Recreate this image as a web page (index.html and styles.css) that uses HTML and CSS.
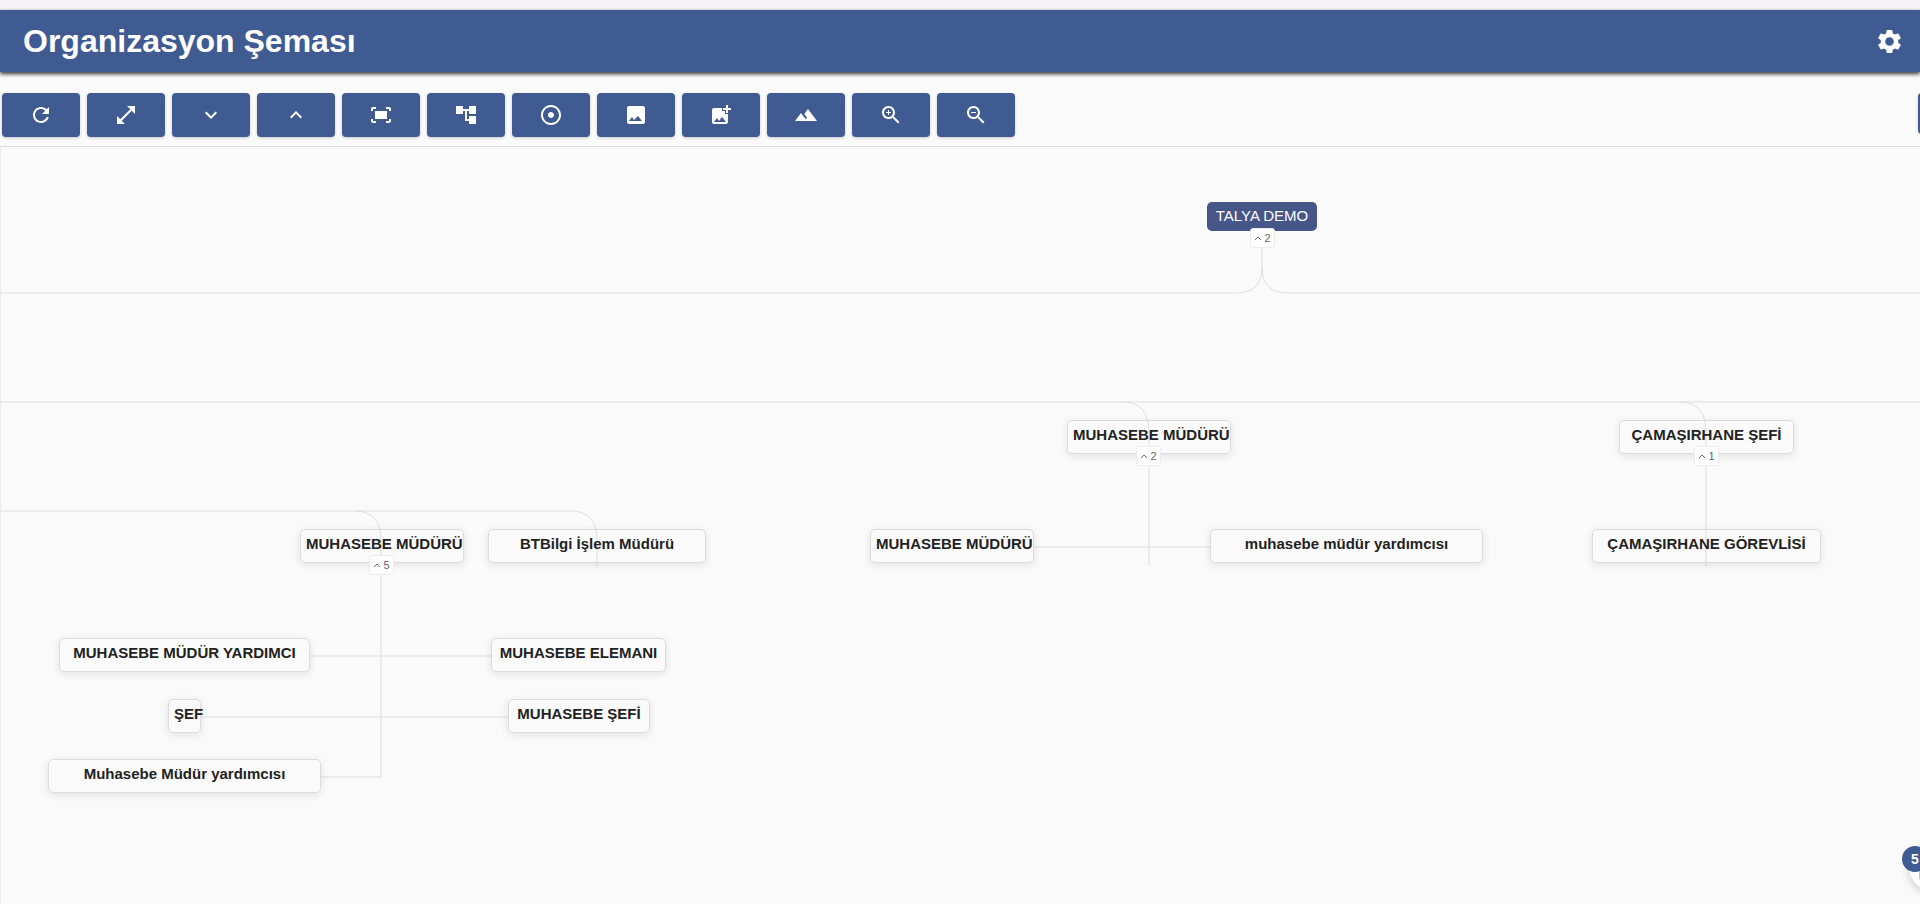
FILE: index.html
```
<!DOCTYPE html>
<html lang="tr">
<head>
  <meta charset="UTF-8" />
  <meta name="viewport" content="width=device-width, initial-scale=1.0" />
  <title>Organizasyon Şeması</title>
  <link rel="stylesheet" href="styles.css">
</head>
<body>
  <header class="header">
    <h1>Organizasyon Şeması</h1>
    <button class="settings" aria-label="Ayarlar">
      <svg viewBox="0 0 24 24"><path d="M19.14 12.94c.04-.3.06-.61.06-.94 0-.32-.02-.64-.07-.94l2.03-1.58c.18-.14.23-.41.12-.61l-1.92-3.32c-.12-.22-.37-.29-.59-.22l-2.39.96c-.5-.38-1.03-.7-1.62-.94l-.36-2.54c-.04-.24-.24-.41-.48-.41h-3.84c-.24 0-.43.17-.47.41l-.36 2.54c-.59.24-1.13.57-1.62.94l-2.39-.96c-.22-.08-.47 0-.59.22L2.74 8.87c-.12.21-.08.47.12.61l2.03 1.58c-.05.3-.09.63-.09.94s.02.64.07.94l-2.03 1.58c-.18.14-.23.41-.12.61l1.92 3.32c.12.22.37.29.59.22l2.39-.96c.5.38 1.03.7 1.62.94l.36 2.54c.05.24.24.41.48.41h3.84c.24 0 .44-.17.47-.41l.36-2.54c.59-.24 1.13-.56 1.62-.94l2.39.96c.22.08.47 0 .59-.22l1.92-3.32c.12-.22.07-.47-.12-.61l-2.01-1.58zM12 15.6c-1.98 0-3.6-1.62-3.6-3.6s1.62-3.6 3.6-3.6 3.6 1.62 3.6 3.6-1.62 3.6-3.6 3.6z"/></svg>
    </button>
  </header>

  <nav class="toolbar">
    <button aria-label="Yenile"><svg viewBox="0 0 24 24"><path d="M17.65 6.35C16.2 4.9 14.21 4 12 4c-4.42 0-7.99 3.58-7.99 8s3.57 8 7.99 8c3.73 0 6.84-2.55 7.73-6h-2.08c-.82 2.33-3.04 4-5.65 4-3.31 0-6-2.69-6-6s2.69-6 6-6c1.66 0 3.14.69 4.22 1.78L13 11h7V4l-2.35 2.35z"/></svg></button>
    <button aria-label="Tam ekran"><svg viewBox="0 0 24 24"><path d="M21 11V3h-8l3.29 3.29-10 10L3 13v8h8l-3.29-3.29 10-10z"/></svg></button>
    <button aria-label="Genişlet"><svg viewBox="0 0 24 24"><path d="M7.41 8.59 12 13.17l4.59-4.58L18 10l-6 6-6-6z"/></svg></button>
    <button aria-label="Daralt"><svg viewBox="0 0 24 24"><path d="m12 8-6 6 1.41 1.41L12 10.83l4.59 4.58L18 14z"/></svg></button>
    <button aria-label="Sığdır"><svg viewBox="0 0 24 24"><path d="M17 4h3c1.1 0 2 .9 2 2v2h-2V6h-3V4zM4 8V6h3V4H4c-1.1 0-2 .9-2 2v2h2zm16 8v2h-3v2h3c1.1 0 2-.9 2-2v-2h-2zM7 18H4v-2H2v2c0 1.1.9 2 2 2h3v-2zM18 8H6v8h12V8z"/></svg></button>
    <button aria-label="Ağaç"><svg viewBox="0 0 24 24"><path d="M22 11V3h-7v3H9V3H2v8h7V8h2v10h4v3h7v-8h-7v3h-2V8h2v3z"/></svg></button>
    <button aria-label="Ortala"><svg viewBox="0 0 24 24"><path d="M12 2C6.49 2 2 6.49 2 12s4.49 10 10 10 10-4.49 10-10S17.51 2 12 2zm0 18c-4.41 0-8-3.59-8-8s3.59-8 8-8 8 3.59 8 8-3.59 8-8 8zm3-8c0 1.66-1.34 3-3 3s-3-1.34-3-3 1.34-3 3-3 3 1.34 3 3z"/></svg></button>
    <button aria-label="Resim"><svg viewBox="0 0 24 24"><path d="M21 19V5c0-1.1-.9-2-2-2H5c-1.1 0-2 .9-2 2v14c0 1.1.9 2 2 2h14c1.1 0 2-.9 2-2zM5 18l3-4 2 3 4-4 4 5H5z"/></svg></button>
    <button aria-label="Resim ekle"><svg viewBox="0 0 24 24"><path d="M19 7v2.99s-1.99.01-2 0V7h-3s.01-1.99 0-2h3V2h2v3h3v2h-3zm-3 4V8h-3V5H5c-1.1 0-2 .9-2 2v12c0 1.1.9 2 2 2h12c1.1 0 2-.9 2-2v-8h-3zM5 19l3-4 2 3 3-4 4 5H5z"/></svg></button>
    <button aria-label="Manzara"><svg viewBox="0 0 24 24"><path d="m14 6-3.75 5 2.85 3.8-1.6 1.2C9.81 13.75 7 10 7 10l-6 8h22L14 6z"/></svg></button>
    <button aria-label="Yakınlaştır"><svg viewBox="0 0 24 24"><path d="M15.5 14h-.79l-.28-.27C15.41 12.59 16 11.11 16 9.5 16 5.91 13.09 3 9.5 3S3 5.91 3 9.5 5.91 16 9.5 16c1.61 0 3.09-.59 4.23-1.57l.27.28v.79l5 4.99L20.49 19l-4.99-5zm-6 0C7.01 14 5 11.99 5 9.5S7.01 5 9.5 5 14 7.01 14 9.5 11.99 14 9.5 14zm2.5-4h-2v2H9v-2H7V9h2V7h1v2h2v1z"/></svg></button>
    <button aria-label="Uzaklaştır"><svg viewBox="0 0 24 24"><path d="M15.5 14h-.79l-.28-.27C15.41 12.59 16 11.11 16 9.5 16 5.91 13.09 3 9.5 3S3 5.91 3 9.5 5.91 16 9.5 16c1.61 0 3.09-.59 4.23-1.57l.27.28v.79l5 4.99L20.49 19l-4.99-5zm-6 0C7.01 14 5 11.99 5 9.5S7.01 5 9.5 5 14 7.01 14 9.5 11.99 14 9.5 14zM7 9h5v1H7z"/></svg></button>
    <button class="more" aria-label="Diğer"></button>
  </nav>

  <main class="chart">
    <svg class="lines">
      <path d="M1262 100v20q0 26-26 26H0M1262 120q0 26 26 26H4000"/>
      <path d="M0 255H4000M1122 255q27 0 27 30V419M1680 255q26 0 26 30V419"/>
      <path d="M1034 400H1210"/>
      <path d="M0 364H571q26 0 26 30V419M355 364q26 0 26 30V630H321"/>
      <path d="M310 509H491M201 570H508"/>
    </svg>

    <div class="node root">TALYA DEMO</div>
    <button class="count count-root"><svg viewBox="0 0 8 6"><path d="M1 5l3-3 3 3"/></svg>2</button>

    <div class="node acc">MUHASEBE MÜDÜRÜ</div>
    <button class="count count-acc"><svg viewBox="0 0 8 6"><path d="M1 5l3-3 3 3"/></svg>2</button>
    <div class="node acc-manager">MUHASEBE MÜDÜRÜ</div>
    <div class="node acc-deputy">muhasebe müdür yardımcısı</div>

    <div class="node laundry">ÇAMAŞIRHANE ŞEFİ</div>
    <button class="count count-laundry"><svg viewBox="0 0 8 6"><path d="M1 5l3-3 3 3"/></svg>1</button>
    <div class="node laundry-staff">ÇAMAŞIRHANE GÖREVLİSİ</div>

    <div class="node left-manager">MUHASEBE MÜDÜRÜ</div>
    <button class="count count-left"><svg viewBox="0 0 8 6"><path d="M1 5l3-3 3 3"/></svg>5</button>
    <div class="node it">BTBilgi İşlem Müdürü</div>
    <div class="node left-deputy">MUHASEBE MÜDÜR YARDIMCI</div>
    <div class="node left-staff">MUHASEBE ELEMANI</div>
    <div class="node chief">ŞEF</div>
    <div class="node acc-chief">MUHASEBE ŞEFİ</div>
    <div class="node left-deputy2">Muhasebe Müdür yardımcısı</div>
  </main>

  <button class="chat" aria-label="Mesajlar">
    <svg viewBox="0 0 24 24"><path d="M2 4h20v14H6l-4 4z"/></svg>
    <span class="chat-badge">5</span>
  </button>
</body>
</html>
```
FILE: styles.css
```
* {
  box-sizing: border-box;
}

body {
  margin: 0;
  padding-top: 10px;
  min-height: 100vh;
  display: flex;
  flex-direction: column;
  overflow: hidden;
  font-family: "Liberation Sans", Arial, sans-serif;
  background: #f5f3f5;
  color: #222;
}

button {
  border: none;
  padding: 0;
  font-family: inherit;
  cursor: pointer;
}

.header {
  display: flex;
  justify-content: space-between;
  align-items: center;
  height: 62px;
  padding: 0 16px 0 23px;
  background: #3f5b91;
  color: #fff;
  box-shadow: 0 2px 4px rgba(0, 0, 0, 0.8);
  position: relative;
  z-index: 1;
}

.header h1 {
  margin: 0;
  font-size: 32px;
  line-height: 40px;
}

.settings {
  width: 29px;
  height: 29px;
  background: none;
}

.settings svg {
  display: block;
  fill: #fff;
}

.toolbar {
  display: flex;
  gap: 7px;
  height: 75px;
  padding: 21px 0 0 2px;
  background: #fafafa;
  border-bottom: 1px solid #dcdcdc;
}

.toolbar button {
  flex: none;
  display: flex;
  align-items: center;
  justify-content: center;
  width: 78px;
  height: 44px;
  background: #3f5b91;
  border-radius: 4px;
  box-shadow: 0 1px 3px rgba(0, 0, 0, 0.2);
}

.toolbar svg {
  width: 24px;
  height: 24px;
  fill: #fff;
}

.toolbar .more {
  height: 41px;
  margin-left: auto;
  margin-right: -76px;
}

.chart {
  flex: 1;
  position: relative;
  overflow: hidden;
  min-height: 700px;
  background: #fafafa;
  border-left: 1px solid #ececec;
}

.lines {
  position: absolute;
  left: -1px;
  top: 0;
  width: calc(100% + 1px);
  height: 100%;
  fill: none;
  stroke: #dddee0;
  stroke-width: 1px;
}

.node {
  position: absolute;
  height: 34px;
  padding: 0 5px;
  border: 1px solid #dcdcde;
  border-radius: 5px;
  box-shadow: 0 2px 8px rgba(0, 0, 0, 0.1);
  font-size: 15px;
  font-weight: bold;
  line-height: 28px;
  text-align: center;
  white-space: nowrap;
}

.root {
  left: 1206px;
  top: 55px;
  width: 110px;
  height: 29px;
  border: none;
  box-shadow: none;
  background: #465688;
  color: #fff;
  font-weight: normal;
}

.acc { left: 1066px; top: 273px; width: 164px; }
.acc-manager { left: 869px; top: 382px; width: 164px; }
.acc-deputy { left: 1209px; top: 382px; width: 273px; }
.laundry { left: 1618px; top: 273px; width: 175px; }
.laundry-staff { left: 1591px; top: 382px; width: 229px; }
.left-manager { left: 299px; top: 382px; width: 164px; }
.it { left: 487px; top: 382px; width: 218px; }
.left-deputy { left: 58px; top: 491px; width: 251px; }
.left-staff { left: 490px; top: 491px; width: 175px; }
.chief { left: 167px; top: 552px; width: 33px; }
.acc-chief { left: 507px; top: 552px; width: 142px; }
.left-deputy2 { left: 47px; top: 612px; width: 273px; }

.count {
  position: absolute;
  display: flex;
  align-items: center;
  justify-content: center;
  gap: 2px;
  width: 25px;
  height: 20px;
  background: #fff;
  border: 1px solid #ececec;
  border-radius: 3px;
  color: #666;
  font-size: 11px;
}

.count svg {
  width: 8px;
  height: 6px;
  fill: none;
  stroke: #666;
}

.count-root { left: 1249px; top: 81px; }
.count-acc { left: 1135px; top: 299px; }
.count-laundry { left: 1693px; top: 299px; }
.count-left { left: 368px; top: 408px; }

.chat {
  position: fixed;
  right: -37px;
  bottom: 13px;
  width: 48px;
  height: 48px;
  border-radius: 50%;
  background: #fff;
  box-shadow: 0 2px 10px rgba(0, 0, 0, 0.2);
}

.chat svg {
  width: 32px;
  fill: #3f5b91;
}

.chat-badge {
  position: absolute;
  left: -7px;
  top: 3px;
  width: 26px;
  height: 26px;
  border-radius: 50%;
  background: #3f5b91;
  color: #fff;
  font-size: 14px;
  font-weight: bold;
  line-height: 26px;
}
```
